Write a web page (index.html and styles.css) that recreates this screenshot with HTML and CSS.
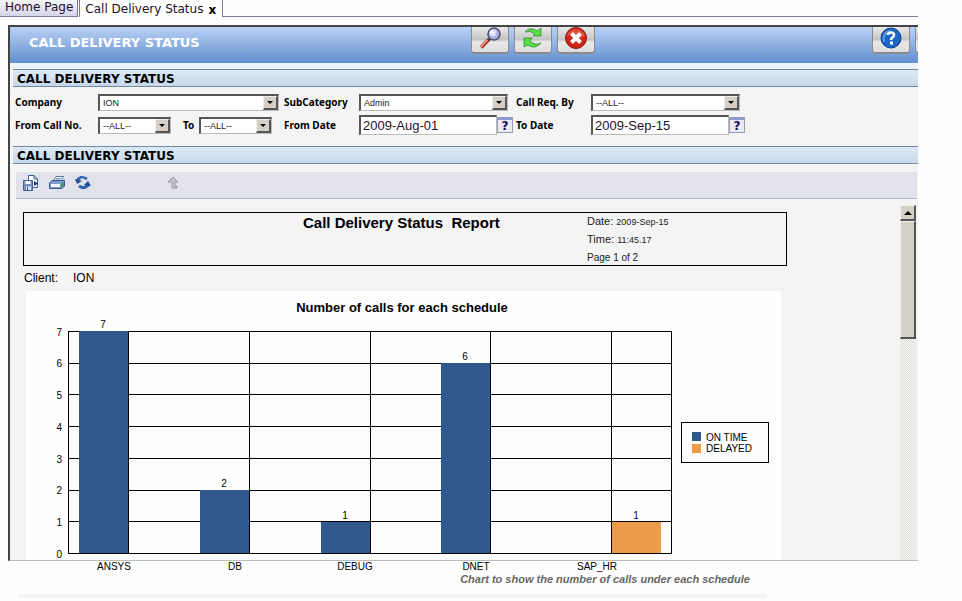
FILE: index.html
```html
<!DOCTYPE html>
<html lang="en">
<head>
<meta charset="utf-8">
<title>Call Delivery Status</title>
<link rel="stylesheet" href="styles.css">
</head>
<body>
<div class="app">
  <nav class="tabs">
    <a class="tab" href="#home">Home Page</a>
    <span class="tab tab-active"><a href="#status">Call Delivery Status</a><button class="tab-close" type="button" aria-label="Close tab">x</button></span>
    <span class="tabs-rest"></span>
  </nav>

  <main class="frame">
    <header class="banner">
      <h1>CALL DELIVERY STATUS</h1>
      <div class="actions">
        <button class="action" type="button" aria-label="Search">
          <svg width="24" height="24" viewBox="0 0 24 24"><path d="M10.500 12.500L3 20.500" stroke="#a33a22" stroke-width="4"/><path d="M9.500 12.500L2.500 20" stroke="#f0907a" stroke-width="2"/><path d="M12 11.500L10 13.500" stroke="#444" stroke-width="3"/><circle cx="16" cy="7" r="6" fill="#aab0dd" stroke="#50506c" stroke-width="1.500"/><circle cx="15" cy="6" r="3.500" fill="#dfe2fa"/><circle cx="14" cy="5" r="1.500" fill="#fff"/></svg>
        </button>
        <button class="action" type="button" aria-label="Refresh">
          <svg width="24" height="24" viewBox="0 0 24 24"><g fill="#5ade42" stroke="#23832a" stroke-width=".7" stroke-linejoin="round"><path d="M4 5Q9 -1 16 4L20 1V9H12L14 7Q9 3 4 5Z"/><path d="M3 11H11L9 14Q14 19 20 16Q14 23 7 18L3 20Z"/></g></svg>
        </button>
        <button class="action" type="button" aria-label="Close">
          <svg width="24" height="24" viewBox="0 0 24 24"><circle cx="12" cy="11" r="10.500" fill="#cf2418" stroke="#8c1712"/><path d="M3 9Q5 2 12 2T21 9Q16 12 12 9Q7 7 3 9Z" fill="#e0503f"/><path d="M7.500 6.500L16.500 15.500M16.500 6.500L7.500 15.500" stroke="#fff" stroke-width="4"/></svg>
        </button>
      </div>
      <div class="actions actions-end">
        <button class="action" type="button" aria-label="Help">
          <svg width="24" height="24" viewBox="0 0 24 24"><circle cx="12" cy="11" r="10" fill="#1f66c4" stroke="#0b3c8c"/><path d="M5 15Q3 6 11 4" fill="none" stroke="#609ce2" stroke-width="2"/><path d="M9 8Q9 5.500 12 5.500T15 8Q15 9.500 13.500 10.500T12 13" fill="none" stroke="#fff" stroke-width="2.500"/><rect x="11" y="14.500" width="3" height="3" fill="#fff"/></svg>
        </button>
        <button class="action" type="button" aria-label="More"></button>
      </div>
    </header>

    <h2 class="section">CALL DELIVERY STATUS</h2>
    <form class="filters">
      <label for="company">Company</label>
      <div class="field"><span class="drop drop-l"><select id="company"><option>ION</option></select><i></i></span></div>
      <label for="sub">SubCategory</label>
      <div class="field"><span class="drop drop-m"><select id="sub"><option>Admin</option></select><i></i></span></div>
      <label for="req">Call Req. By</label>
      <div class="field"><span class="drop drop-m"><select id="req"><option>--ALL--</option></select><i></i></span></div>

      <label for="from-no">From Call No.</label>
      <div class="field">
        <span class="drop drop-s"><select id="from-no"><option>--ALL--</option></select><i></i></span>
        <label class="to" for="to-no">To</label>
        <span class="drop drop-s"><select id="to-no"><option>--ALL--</option></select><i></i></span>
      </div>
      <label for="from-date">From Date</label>
      <div class="field"><input id="from-date" type="text" value="2009-Aug-01"><button class="cal" type="button" aria-label="Pick from date">?</button></div>
      <label for="to-date">To Date</label>
      <div class="field"><input id="to-date" type="text" value="2009-Sep-15"><button class="cal" type="button" aria-label="Pick to date">?</button></div>
    </form>

    <h2 class="section">CALL DELIVERY STATUS</h2>
    <div class="toolbar">
      <button type="button" aria-label="Export"><svg width="16" height="16" viewBox="0 0 16 16"><path d="M5.500 .5H11L14.500 4V12.500H5.500Z" fill="#fff" stroke="#3d5f96"/><path d="M11 .5V4H14.500" fill="none" stroke="#3d5f96"/><path d="M11 6L15 8.500L11 11Z" fill="#183a78"/><path d="M.5 5.500H9.500V15.500H.5Z" fill="#7890bd" stroke="#3d5f96"/><path d="M2.500 6H7.500V9H2.500Z" fill="#fff"/><path d="M3 11.500H8V15H3Z" fill="#dde6f4"/><path d="M4 12H5V15H4Z" fill="#294a82"/></svg></button>
      <button type="button" aria-label="Print"><svg width="16" height="16" viewBox="0 0 16 16"><path d="M4 6L7 1.500H14.500L12 6Z" fill="#fff" stroke="#5873a3"/><path d="M7 3.500H12M6 5H11" stroke="#7e91b6"/><path d="M.5 8L3 5.500H15.500V11L13 13.500H.5Z" fill="#7d9acb" stroke="#3b5b92"/><path d="M2 9H11V12H2Z" fill="#f4f8ff"/><path d="M12 9L15 7V11L12 13Z" fill="#3f9a5b"/></svg></button>
      <button type="button" aria-label="Refresh report"><svg width="16" height="16" viewBox="0 0 16 16"><path d="M2 6Q5 0 12 4" fill="none" stroke="#2f61b0" stroke-width="3"/><path d="M0 4L2 9L7 6Z" fill="#204d99"/><path d="M14 9Q10 15 4 11" fill="none" stroke="#2f61b0" stroke-width="3"/><path d="M16 11L13 6L9 10Z" fill="#204d99"/><path d="M5 4Q8 2 11 5" fill="none" stroke="#92b5e3"/></svg></button>
      <button class="up" type="button" aria-label="Up" disabled><svg width="16" height="16" viewBox="0 0 16 16"><path d="M8 2L13 7H10V11H12V13H7V7H3Z" fill="#c3c3cb" stroke="#9b9ba6"/></svg></button>
    </div>

    <div class="viewer">
      <article class="report">
        <div class="report-head">
          <h3>Call Delivery Status&nbsp; Report</h3>
          <div class="meta">
            <p>Date: <small>2009-Sep-15</small></p>
            <p>Time: <small>11:45.17</small></p>
            <p class="page">Page 1 of 2</p>
          </div>
        </div>
        <p class="client"><span>Client:</span><span>ION</span></p>
        <svg class="chart" width="755" height="269" viewBox="0 0 755 269" role="img" aria-label="Number of calls for each schedule">
          <rect width="755" height="269" fill="#fefefe"/>
          <text class="chart-title" x="376" y="21">Number of calls for each schedule</text>
          <g shape-rendering="crispEdges">
            <path class="grid" d="M42 40.500H646M42 72.500H646M42 103.500H646M42 135.500H646M42 167.500H646M42 199.500H646M42 230.500H646M42 262.500H646M42.500 40V263M102.500 40V263M223.500 40V263M344.500 40V263M464.500 40V263M585.500 40V263M645.500 40V263"/>
            <g fill="#305a8d">
              <rect x="53" y="40" width="49" height="222"/>
              <rect x="174" y="199" width="49" height="63"/>
              <rect x="295" y="231" width="49" height="31"/>
              <rect x="415" y="72" width="49" height="190"/>
            </g>
            <rect x="586" y="231" width="49" height="31" fill="#ed9a49"/>
            <rect x="655.500" y="131.500" width="87" height="40" fill="#fefefe" stroke="#000"/>
            <rect x="666" y="141" width="9" height="9" fill="#305a8d"/>
            <rect x="666" y="153" width="9" height="9" fill="#ed9a49"/>
          </g>
          <g text-anchor="end">
            <text x="36" y="45">7</text><text x="36" y="76">6</text><text x="36" y="108">5</text><text x="36" y="140">4</text><text x="36" y="172">3</text><text x="36" y="203">2</text><text x="36" y="235">1</text><text x="36" y="267">0</text>
          </g>
          <g text-anchor="middle">
            <text x="77" y="37">7</text><text x="198" y="196">2</text><text x="319" y="228">1</text><text x="439" y="69">6</text><text x="610" y="228">1</text>
            <text x="88" y="279">ANSYS</text><text x="209" y="279">DB</text><text x="329" y="279">DEBUG</text><text x="450" y="279">DNET</text><text x="571" y="279">SAP_HR</text>
          </g>
          <text x="680" y="150">ON TIME</text>
          <text x="680" y="161">DELAYED</text>
          <text class="caption" x="579" y="292">Chart to show the number of calls under each schedule</text>
        </svg>
      </article>
      <div class="scroll">
        <button type="button" aria-label="Scroll up"></button>
        <div class="thumb"></div>
      </div>
    </div>
  </main>
  <div class="rule"></div>
</div>
</body>
</html>
```
FILE: styles.css
```css
* { box-sizing: border-box; }
body { margin: 0; background: #fefefe; color: #000; font-family: "DejaVu Sans", sans-serif; font-size: 12px; }
h1, h2, h3, p { margin: 0; }
button { padding: 0; border: 0; background: none; font: inherit; color: inherit; }
svg { display: block; }
.app { margin-right: 44px; }

.tabs { display: flex; height: 17px; }
.tabs a { color: #22102c; text-decoration: none; }
.tab { padding: 0 4px 0 5px; line-height: 15px; border-right: 1px solid #77789a; border-bottom: 1px solid #77789a; background: linear-gradient(#f6f6fc, #d5d5e8); white-space: nowrap; }
.tab-active { display: flex; align-items: center; gap: 5px; margin-left: 1px; padding: 2px 6px 0 5px; border-left: 1px solid #77789a; border-bottom: 0; background: #fefefe; }
.tab-close { font-weight: bold; line-height: 14px; }
.tabs-rest { flex: 1; border-bottom: 1px solid #7c8296; }

.frame { margin: 8px 0 0 8px; border: 2px solid #444; border-right: 0; border-bottom: 1px solid #bbb; background: #f4f4f4; }
.banner { display: flex; height: 36px; overflow: hidden; background: linear-gradient(#b9d1f5, #6290cf); }
.banner h1 { flex: none; width: 461px; padding-left: 19px; color: #fff; font-size: 13px; line-height: 31px; }
.actions { display: flex; gap: 5px; }
.actions-end { margin: 0 -35px 0 auto; }
.action { display: flex; justify-content: center; width: 38px; height: 27px; border: 1px solid #8b8b8f; border-top: 0; border-bottom-width: 2px; border-radius: 0 0 4px 4px; background: linear-gradient(#e9e9e9, #c5c5c5 50%, #e8e8e8 60%, #dedede); }

.section { height: 18px; margin-left: 3px; padding-left: 4px; border-top: 1px solid #7189a5; border-bottom: 1px solid #7189a5; background: linear-gradient(#dde9f5, #c8d8ea); font-size: 12px; line-height: 18px; }
.banner + .section { margin-top: 6px; box-shadow: 0 -6px #edf4fc; }

.filters { display: grid; grid-template-columns: 83px 186px 75px 157px 75px 1fr; grid-template-rows: 20px 20px; align-items: center; row-gap: 3px; padding: 5px 0 11px 5px; font-family: "Noto Sans", sans-serif; font-size: 10px; font-weight: bold; }
.field { display: flex; align-items: center; }
.drop { position: relative; display: flex; }
.drop-l { width: 181px; }
.drop-m { width: 149px; }
.drop-s { width: 73px; }
.drop select { appearance: none; width: 100%; height: 17px; padding: 0 0 0 3px; border: 1px solid #bbb; border-top: 2px solid #555; border-left: 2px solid #555; border-radius: 0; background: #fff; color: #222; font: 9px/12px "Liberation Sans", sans-serif; }
.drop i { position: absolute; top: 2px; right: 1px; width: 15px; height: 14px; border: 1px solid #eee; border-right: 2px solid #555; border-bottom: 2px solid #555; background: #d4d0c8; pointer-events: none; }
.drop i::after { content: ""; position: absolute; top: 4px; left: 3px; border: 3px solid transparent; border-top-color: #000; border-bottom: 0; }
.to { width: 28px; padding-left: 12px; }
.filters input { width: 138px; height: 20px; padding: 0 2px; border: 1px solid #bbb; border-top: 2px solid #555; border-left: 2px solid #555; background: #fff; color: #1c1030; font: 13px "Liberation Sans", sans-serif; }
.cal { width: 16px; height: 16px; border: 1px solid #9a9ab2; border-top: 3px solid #8f9bd0; background: #eceaf5; color: #111158; font: bold 12px/12px "DejaVu Sans", sans-serif; }

.toolbar { display: flex; gap: 10px; height: 27px; margin: 8px 1px 0 6px; padding: 3px 7px; border-bottom: 1px solid #b2b6cc; background: #e2e2eb; }
.toolbar button { width: 16px; height: 16px; }
.toolbar .up { margin-left: 64px; }

.viewer { display: flex; margin: 6px 2px 0 13px; font-family: "Liberation Sans", sans-serif; }
.report { flex: 1; padding-top: 7px; }
.report-head { display: grid; grid-template-columns: 563px auto; width: 764px; height: 54px; border: 1px solid #000; }
.report-head h3 { padding-left: 279px; font-size: 15px; line-height: 20px; white-space: nowrap; }
.meta { font-size: 11px; line-height: 17px; color: #222; }
.meta small { font-size: 9px; }
.meta .page { font-size: 10px; }
.client { display: flex; gap: 15px; padding: 5px 0 5px 1px; font-size: 12px; line-height: 15px; }
.chart { margin-left: 3px; overflow: visible; font-size: 10px; }
.grid { fill: none; stroke: #000; }
.chart-title { font-size: 13px; font-weight: bold; text-anchor: middle; }
.caption { fill: #666; font-size: 11px; font-weight: bold; font-style: italic; text-anchor: middle; }

.scroll { width: 16px; background: repeating-conic-gradient(#dedbd4 0 25%, #fafafa 0 50%) 0 0 / 2px 2px; }
.scroll button, .thumb { display: block; width: 16px; height: 16px; border: 1px solid #f2f0ec; border-right: 2px solid #555; border-bottom: 2px solid #555; background: #d4d0c8; }
.scroll button::after { content: ""; display: block; width: 0; margin: 0 auto; border: 4px solid transparent; border-bottom-color: #000; border-top: 0; }
.scroll .thumb { height: 118px; }
.rule { height: 4px; margin: 33px 151px 0 19px; background: #f4f4f4; }
```
